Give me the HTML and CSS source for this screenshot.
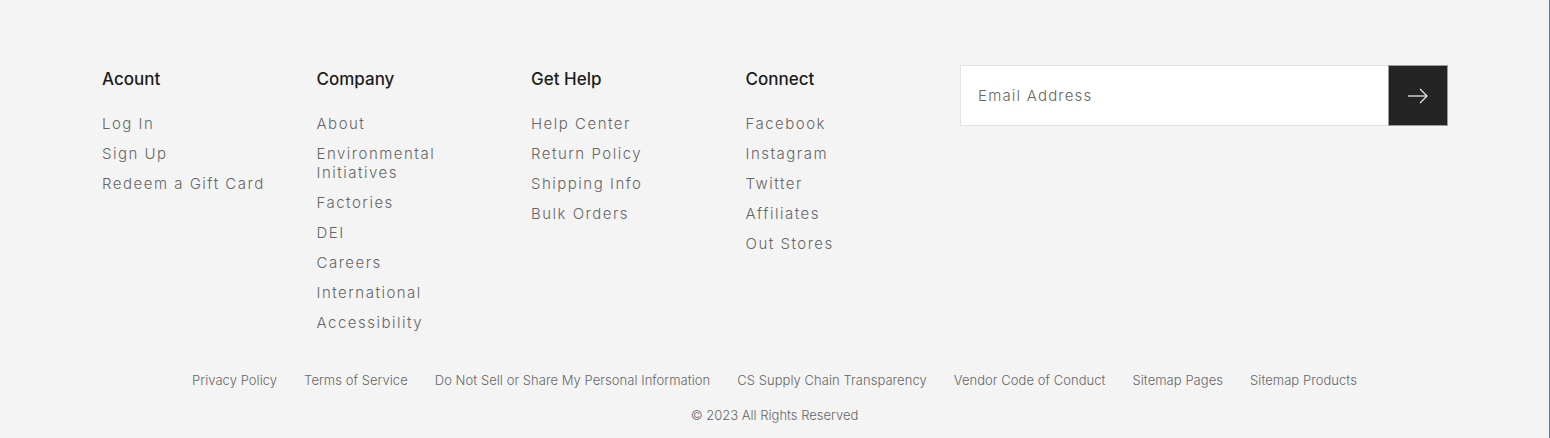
FILE: index.html
```html
<!DOCTYPE html>
<html lang="en">
<head>
<meta charset="utf-8">
<title>Footer</title>
<link rel="stylesheet" href="styles.css">
</head>
<body>
<footer class="footer">
  <div class="footer-top">
    <div class="col">
      <h3 class="col-title">Acount</h3>
      <ul class="col-links">
        <li><a href="#">Log In</a></li>
        <li><a href="#">Sign Up</a></li>
        <li><a href="#">Redeem a Gift Card</a></li>
      </ul>
    </div>
    <div class="col">
      <h3 class="col-title">Company</h3>
      <ul class="col-links">
        <li><a href="#">About</a></li>
        <li><a href="#">Environmental Initiatives</a></li>
        <li><a href="#">Factories</a></li>
        <li><a href="#">DEI</a></li>
        <li><a href="#">Careers</a></li>
        <li><a href="#">International</a></li>
        <li><a href="#">Accessibility</a></li>
      </ul>
    </div>
    <div class="col">
      <h3 class="col-title">Get Help</h3>
      <ul class="col-links">
        <li><a href="#">Help Center</a></li>
        <li><a href="#">Return Policy</a></li>
        <li><a href="#">Shipping Info</a></li>
        <li><a href="#">Bulk Orders</a></li>
      </ul>
    </div>
    <div class="col">
      <h3 class="col-title">Connect</h3>
      <ul class="col-links">
        <li><a href="#">Facebook</a></li>
        <li><a href="#">Instagram</a></li>
        <li><a href="#">Twitter</a></li>
        <li><a href="#">Affiliates</a></li>
        <li><a href="#">Out Stores</a></li>
      </ul>
    </div>
    <form class="signup" onsubmit="return false;">
      <input class="signup-input" type="email" placeholder="Email Address">
      <button class="signup-btn" type="submit" aria-label="Subscribe">
        <svg width="22" height="16" viewBox="0 0 22 16" fill="none" stroke="#e8e8e8" stroke-width="1.3">
          <path d="M1 8H20"/>
          <path d="M13 1L20 8L13 15"/>
        </svg>
      </button>
    </form>
  </div>
  <nav class="legal">
    <a href="#">Privacy Policy</a>
    <a href="#">Terms of Service</a>
    <a href="#">Do Not Sell or Share My Personal Information</a>
    <a href="#">CS Supply Chain Transparency</a>
    <a href="#">Vendor Code of Conduct</a>
    <a href="#">Sitemap Pages</a>
    <a href="#">Sitemap Products</a>
  </nav>
  <p class="copyright">© 2023 All Rights Reserved</p>
</footer>
</body>
</html>
```

FILE: styles.css
```css
* { box-sizing: border-box; }

html, body {
  margin: 0;
  padding: 0;
  height: 100%;
}

body {
  background: #f4f4f4;
  font-family: Inter, "Liberation Sans", sans-serif;
  color: #222;
  border-right: 1px solid #1a8de6;
}

.footer {
  padding-top: 67px;
}

.footer-top {
  display: grid;
  grid-template-columns: 214.5px 214.5px 214.5px 214.5px 488px;
  padding-left: 102px;
  align-items: start;
}

.col-title {
  margin: 0;
  font-size: 17px;
  line-height: 24px;
  font-weight: 500;
  color: #1c1c1c;
}

.col-links {
  list-style: none;
  margin: 22.5px 0 0;
  padding: 0;
  display: flex;
  flex-direction: column;
  gap: 11px;
}

.col-links a {
  display: block;
  font-size: 15px;
  line-height: 19px;
  letter-spacing: 1.5px;
  font-weight: 300;
  color: #666;
  text-decoration: none;
  max-width: 185px;
}

.signup {
  display: flex;
  margin-top: -2px;
  height: 61px;
}

.signup-input {
  flex: 1;
  height: 100%;
  border: 1px solid #e2e2e2;
  border-right: none;
  background: #fff;
  padding: 0 17px;
  font-family: Inter, "Liberation Sans", sans-serif;
  font-size: 15px;
  letter-spacing: 1.2px;
  font-weight: 300;
  color: #333;
  outline: none;
}

.signup-input::placeholder {
  color: #666;
}

.signup-btn {
  width: 60px;
  height: 100%;
  background: #242424;
  border: 1px solid #9a9a9a;
  display: flex;
  align-items: center;
  justify-content: center;
  padding: 0;
  cursor: pointer;
}

.legal {
  display: flex;
  justify-content: center;
  gap: 27px;
  margin-top: 39px;
  font-size: 13px;
  line-height: 18px;
  letter-spacing: 0.05px;
}

.legal a {
  color: #666;
  text-decoration: none;
  font-weight: 300;
}

.copyright {
  margin: 17px 0 0;
  text-align: center;
  font-size: 13px;
  line-height: 18px;
  color: #666;
  font-weight: 300;
}
```
